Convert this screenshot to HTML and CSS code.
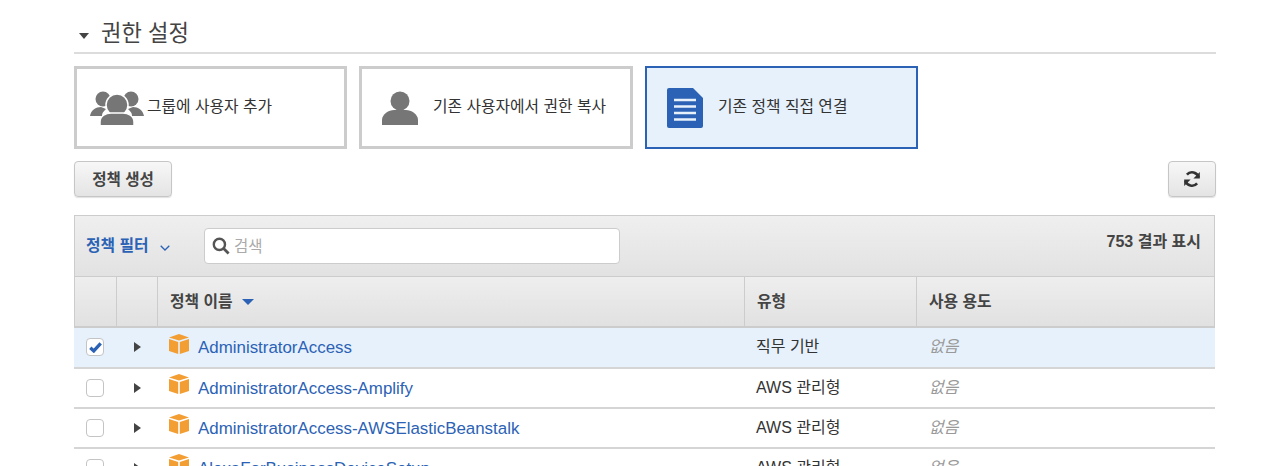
FILE: index.html
```html
<!DOCTYPE html>
<html lang="ko">
<head>
<meta charset="utf-8">
<title>권한 설정</title>
<link rel="stylesheet" href="styles.css">
</head>
<body>
<main class="page">
  <h2 class="section-title"><span class="caret-down"></span>권한 설정</h2>
  <div class="cards">
    <div class="card">
      <svg class="icon-group" viewBox="0 0 54 34"><g fill="#767676"><circle cx="13" cy="8" r="7.500"/><circle cx="41" cy="8" r="7.500"/><path d="M0 25c1-6 6-9 11-9l5 2c-3 3-4 4-4 7z"/><path d="M54 25c-1-6-6-9-11-9l-5 2c3 3 4 4 4 7z"/></g><circle cx="27" cy="14" r="11" fill="#767676" stroke="#fff" stroke-width="1.500"/><path d="M10 35v-4c0-6 6-9 11-9h12c5 0 11 3 11 9v4z" fill="#767676" stroke="#fff" stroke-width="1.500"/></svg>
      <span class="card-text first">그룹에 사용자 추가</span>
    </div>
    <div class="card wide">
      <svg class="icon-user" viewBox="0 0 36 34"><circle cx="18" cy="10" r="9.500" fill="#767676"/><path d="M0 34v-5c0-6 7-10 12-10h12c5 0 12 4 12 10v5z" fill="#767676"/></svg>
      <span class="card-text">기존 사용자에서 권한 복사</span>
    </div>
    <div class="card selected">
      <svg class="icon-doc" viewBox="0 0 36 40"><path d="M2 0h24l10 10v28a2 2 0 0 1-2 2H2a2 2 0 0 1-2-2V2a2 2 0 0 1 2-2z" fill="#2b62b5"/><path d="M7 12h22M7 18.500h22M7 25h22M7 31.500h22" stroke="#e6f1fc" stroke-width="2.600"/></svg>
      <span class="card-text">기존 정책 직접 연결</span>
    </div>
  </div>
  <div class="actions">
    <button class="btn btn-create">정책 생성</button>
    <button class="btn btn-refresh" aria-label="새로 고침">
      <svg viewBox="0 0 18 18" class="icon-refresh"><path d="M15.600 7.400A6.800 6.800 0 0 0 3.900 4.600" fill="none" stroke="#333" stroke-width="2.600"/><path d="M16.800 2v6.400h-6.400z" fill="#333"/><path d="M2.400 10.600a6.800 6.800 0 0 0 11.700 2.800" fill="none" stroke="#333" stroke-width="2.600"/><path d="M1.200 16V9.600h6.400z" fill="#333"/></svg>
    </button>
  </div>
  <section class="panel">
    <div class="filter-bar">
      <span class="filter-label">정책 필터</span>
      <svg class="icon-chevron" viewBox="0 0 10 6"><path d="M.7.7 5 5l4.300-4.300" fill="none" stroke="#2b62b5" stroke-width="1.300"/></svg>
      <div class="search">
        <svg class="icon-search" viewBox="0 0 18 18"><circle cx="7.400" cy="7.400" r="5.600" fill="none" stroke="#555" stroke-width="2.400"/><path d="m11.600 11.600 5 5" stroke="#555" stroke-width="2.800"/></svg>
        <span class="placeholder">검색</span>
      </div>
      <span class="count">753 결과 표시</span>
    </div>
    <div class="row head">
      <div class="cell c-check"></div>
      <div class="cell c-expand"></div>
      <div class="cell c-name">정책 이름<span class="sort-caret"></span></div>
      <div class="cell c-type">유형</div>
      <div class="cell c-use">사용 용도</div>
    </div>
    <div class="row body-row active">
      <div class="cell c-check"><span class="checkbox checked"><svg viewBox="0 0 12 10"><path d="M1.200 5.200 4.400 8.200 10.800 1.200" fill="none" stroke="#2b62b5" stroke-width="3"/></svg></span></div>
      <div class="cell c-expand"><span class="caret-right"></span></div>
      <div class="cell c-name"><svg class="icon-box" viewBox="0 0 20 20"><path d="M10 0 20 3.500 10 6.500 0 3.500z" fill="#f29e33"/><path d="M0 5 9.200 8v12L0 17z" fill="#f29e33"/><path d="M20 5 10.800 8v12L20 17z" fill="#f29e33"/></svg><a class="policy">AdministratorAccess</a></div>
      <div class="cell c-type">직무 기반</div>
      <div class="cell c-use none">없음</div>
    </div>
    <div class="row body-row">
      <div class="cell c-check"><span class="checkbox"></span></div>
      <div class="cell c-expand"><span class="caret-right"></span></div>
      <div class="cell c-name"><svg class="icon-box" viewBox="0 0 20 20"><path d="M10 0 20 3.500 10 6.500 0 3.500z" fill="#f29e33"/><path d="M0 5 9.200 8v12L0 17z" fill="#f29e33"/><path d="M20 5 10.800 8v12L20 17z" fill="#f29e33"/></svg><a class="policy">AdministratorAccess-Amplify</a></div>
      <div class="cell c-type">AWS 관리형</div>
      <div class="cell c-use none">없음</div>
    </div>
    <div class="row body-row">
      <div class="cell c-check"><span class="checkbox"></span></div>
      <div class="cell c-expand"><span class="caret-right"></span></div>
      <div class="cell c-name"><svg class="icon-box" viewBox="0 0 20 20"><path d="M10 0 20 3.500 10 6.500 0 3.500z" fill="#f29e33"/><path d="M0 5 9.200 8v12L0 17z" fill="#f29e33"/><path d="M20 5 10.800 8v12L20 17z" fill="#f29e33"/></svg><a class="policy">AdministratorAccess-AWSElasticBeanstalk</a></div>
      <div class="cell c-type">AWS 관리형</div>
      <div class="cell c-use none">없음</div>
    </div>
    <div class="row body-row">
      <div class="cell c-check"><span class="checkbox"></span></div>
      <div class="cell c-expand"><span class="caret-right"></span></div>
      <div class="cell c-name"><svg class="icon-box" viewBox="0 0 20 20"><path d="M10 0 20 3.500 10 6.500 0 3.500z" fill="#f29e33"/><path d="M0 5 9.200 8v12L0 17z" fill="#f29e33"/><path d="M20 5 10.800 8v12L20 17z" fill="#f29e33"/></svg><a class="policy">AlexaForBusinessDeviceSetup</a></div>
      <div class="cell c-type">AWS 관리형</div>
      <div class="cell c-use none">없음</div>
    </div>
  </section>
</main>
</body>
</html>
```
FILE: styles.css
```css
* { box-sizing: border-box; }
html, body { margin: 0; height: 466px; overflow: hidden; background: #fff; }
body { font-family: "Liberation Sans", "Noto Sans CJK KR", sans-serif; color: #333; font-size: 16px; }
.page { width: 1142px; margin-left: 74px; padding-top: 14px; }

.section-title { margin: 0; height: 40px; padding-top: 2px; border-bottom: 2px solid #dcdcdc; font-size: 22.200px; font-weight: 400; line-height: 36px; color: #444; display: flex; align-items: center; }
.caret-down { width: 0; height: 0; border-left: 5.500px solid transparent; border-right: 5.500px solid transparent; border-top: 6px solid #444; margin: 3px 12px 0 5px; }

.cards { display: flex; gap: 12px; margin-top: 12px; }
.card { width: 273px; height: 83px; border: 3px solid #ccc; display: flex; align-items: center; padding-left: 13px; background: #fff; }
.card.wide { width: 274px; }
.card.selected { border: 2px solid #2b62b5; background: #e6f1fc; padding-left: 20px; width: 273px; }
.card-text { font-size: 15.800px; color: #333; margin: 0 0 5px 15px; }
.card-text.first { margin-left: 3px; }
.selected .card-text { margin-left: 15px; }
.icon-group { width: 54px; height: 34px; flex: none; }
.icon-user { width: 36px; height: 34px; flex: none; margin-left: 7px; }
.icon-doc { width: 36px; height: 40px; flex: none; }

.actions { display: flex; justify-content: space-between; margin-top: 12px; }
.btn { height: 36px; border: 1px solid #c6c6c6; border-radius: 4px; background: linear-gradient(#f7f7f7, #e4e4e4); box-shadow: 0 1px 1px rgba(0,0,0,.12); font: 700 15.600px "Liberation Sans", "Noto Sans CJK KR", sans-serif; color: #444; padding: 0 0 3px; display: flex; align-items: center; justify-content: center; }
.btn-create { width: 98px; }
.btn-refresh { width: 48px; padding: 0; }
.icon-refresh { width: 18px; height: 18px; }

.panel { margin-top: 18px; width: 1141px; border: 1px solid #ccc; border-bottom: 0; }
.filter-bar { height: 61px; display: flex; align-items: flex-start; background: linear-gradient(#efefef, #e2e2e2); border-bottom: 1px solid #ccc; padding-left: 11px; }
.filter-label { width: 63px; font-size: 15.800px; line-height: 23px; font-weight: 700; color: #2b62b5; margin-top: 18px; white-space: nowrap; }
.icon-chevron { width: 10px; height: 6px; margin: 29px 0 0 11px; }
.search { width: 416px; height: 36px; margin: 12px 0 0 34px; background: #fff; border: 1px solid #ccc; border-radius: 4px; display: flex; align-items: center; padding-left: 7px; }
.icon-search { width: 18px; height: 18px; }
.placeholder { color: #aaa; font-size: 15.500px; margin: 0 0 3px 4px; }
.count { margin: 14px 13px 0 auto; line-height: 23px; font-weight: 700; font-size: 16px; color: #444; }

.row { display: grid; }
.head { grid-template-columns: 41px 41px 587px 172px 1fr; height: 51px; background: linear-gradient(#eeeeee, #e1e1e1); border-bottom: 2px solid #ccc; }
.head .cell { border-left: 1px solid #ccc; font-weight: 700; color: #444; font-size: 15.800px; padding-bottom: 2px; }
.head .cell:first-child { border-left: 0; }
.cell { display: flex; align-items: center; padding-left: 12px; min-width: 0; white-space: nowrap; }
.sort-caret { width: 0; height: 0; margin: 3px 0 0 9px; border-left: 6px solid transparent; border-right: 6px solid transparent; border-top: 6px solid #2b62b5; }

.body-row { grid-template-columns: 42px 41px 587px 172px 1fr; height: 40px; border-bottom: 2px solid #d5d5d5; background: #fff; font-size: 16px; margin: 0 -1px; }
.body-row.active { background: #e6f1fc; height: 41px; }
.body-row .cell { padding-bottom: 3px; }
.body-row .c-type, .body-row .c-use { padding-bottom: 5px; }
.body-row .c-use { padding-left: 13px; }
.body-row .c-check, .body-row .c-expand { padding-bottom: 1px; }
.head .c-check, .head .c-expand, .body-row .c-check { justify-content: center; padding-left: 0; }
.body-row .c-expand { justify-content: center; padding-left: 2px; }
.checkbox { width: 18px; height: 18px; border: 1px solid #c4c4c4; border-radius: 4px; background: #fff; display: flex; align-items: center; justify-content: center; }
.checkbox svg { width: 13px; height: 11px; }
.caret-right { width: 0; height: 0; border-top: 5.500px solid transparent; border-bottom: 5.500px solid transparent; border-left: 7px solid #444; }
.icon-box { width: 20px; height: 20px; flex: none; margin: -5px 9px 0 0; }
.policy { color: #2b62b5; font-size: 16.900px; margin-top: 4px; }
.none { font-style: italic; color: #999; }
```
